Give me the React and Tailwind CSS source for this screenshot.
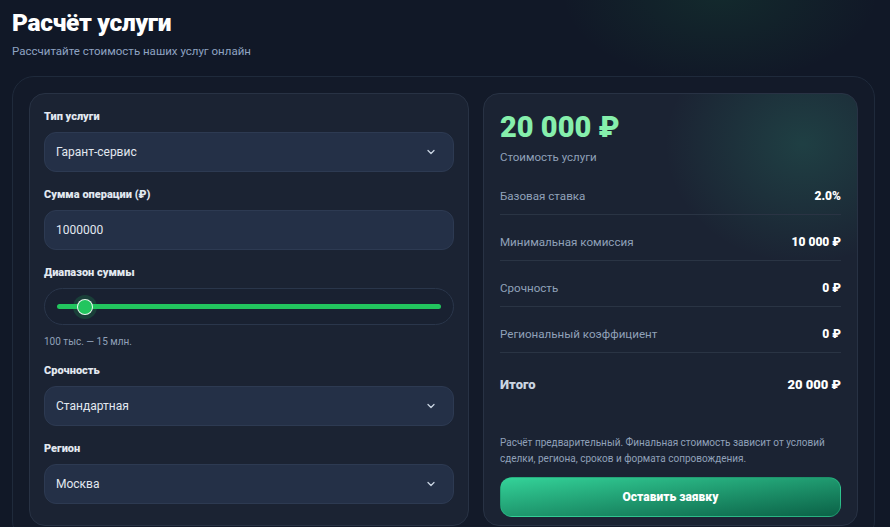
import { ChevronDown } from 'lucide-react';

const body = { fontFamily: 'Roboto, "Noto Sans", sans-serif' };
const heavy = { fontFamily: 'Roboto, Inter, sans-serif' };

function Label({ children }) {
  return (
    <div style={heavy} className="text-[11px] leading-[14px] font-black text-slate-200 mb-2">
      {children}
    </div>
  );
}

function Select({ value }) {
  return (
    <div className="h-10 rounded-xl bg-[#243047] border border-[#2d3a52] flex items-center justify-between pl-[11px] pr-4">
      <span className="text-[12px] text-slate-200">{value}</span>
      <ChevronDown className="h-3 w-3 text-slate-300" strokeWidth={2.5} />
    </div>
  );
}

function Row({ label, value }) {
  return (
    <div className="flex items-center justify-between py-[9px] border-b border-[#2a3444]">
      <span className="text-[11.6px] leading-[17px] text-slate-400">{label}</span>
      <span style={heavy} className="text-[12px] leading-[17px] font-black text-white">{value}</span>
    </div>
  );
}

export default function App() {
  return (
    <div style={body} className="relative min-h-screen bg-[#111827] overflow-hidden">
      {/* faint glow top right */}
      <div className="pointer-events-none absolute -top-24 left-[560px] w-[320px] h-[180px] rounded-full bg-[radial-gradient(ellipse_at_center,rgba(34,197,94,0.10),transparent_70%)]" />

      <div className="relative px-3 pt-[6px]">
        <h1 style={heavy} className="text-[24.5px] leading-[34px] font-black text-white tracking-[-0.3px]">
          Расчёт услуги
        </h1>
        <p className="mt-[3px] text-[11.5px] leading-[16px] text-[#8fa3c2]">
          Рассчитайте стоимость наших услуг онлайн
        </p>

        <div className="mt-[17px] mr-[3px] rounded-[22px] border border-[#1f2a3b] bg-[#131a29] p-4">
          <div className="grid grid-cols-[440px_1fr] gap-[14px]">
            {/* Left card */}
            <div className="rounded-2xl border border-[#283244] bg-[#1b2333] px-[14px] pt-4 pb-5 space-y-4">
              <div>
                <Label>Тип услуги</Label>
                <Select value="Гарант-сервис" />
              </div>
              <div>
                <Label>Сумма операции (₽)</Label>
                <div className="h-10 rounded-xl bg-[#243047] border border-[#2d3a52] flex items-center px-[11px]">
                  <span className="text-[12px] text-slate-200">1000000</span>
                </div>
              </div>
              <div>
                <Label>Диапазон суммы</Label>
                <div className="h-[37px] rounded-full border border-[#2a364b] bg-[#192131] flex items-center px-[12px]">
                  <div className="relative w-full h-[5px] rounded-full bg-[#22c55e]">
                    <div className="absolute top-1/2 left-[20px] -translate-y-1/2 h-4 w-4 rounded-full bg-[#22c55e] border border-white/90 shadow-[0_0_0_4px_rgba(34,197,94,0.18)]" />
                  </div>
                </div>
                <div className="mt-[10px] text-[10px] leading-[13px] text-slate-400">100 тыс. — 15 млн.</div>
              </div>
              <div>
                <Label>Срочность</Label>
                <Select value="Стандартная" />
              </div>
              <div>
                <Label>Регион</Label>
                <Select value="Москва" />
              </div>
            </div>

            {/* Right card */}
            <div className="relative overflow-hidden rounded-2xl border border-[#283244] bg-[#1b2333] px-4 pt-4 pb-2 flex flex-col">
              <div className="pointer-events-none absolute -top-20 -right-24 w-[300px] h-[260px] rounded-full bg-[radial-gradient(ellipse_at_center,rgba(52,211,153,0.16),transparent_65%)]" />
              <div className="relative">
                <div style={heavy} className="text-[29px] leading-[34px] font-black text-[#86efac]">
                  20 000 ₽
                </div>
                <div className="mt-[5px] text-[11.5px] leading-[16px] text-slate-400">Стоимость услуги</div>

                <div className="mt-[14px] flex flex-col gap-[10px]">
                  <Row label="Базовая ставка" value="2.0%" />
                  <Row label="Минимальная комиссия" value="10 000 ₽" />
                  <Row label="Срочность" value="0 ₽" />
                  <Row label="Региональный коэффициент" value="0 ₽" />
                  <div className="flex items-center justify-between pt-[13px] pb-2">
                    <span style={heavy} className="text-[13px] leading-[18px] font-black text-slate-300">Итого</span>
                    <span style={heavy} className="text-[13px] leading-[18px] font-black text-white">20 000 ₽</span>
                  </div>
                </div>

                <p className="mt-[33px] text-[10px] leading-[16px] text-slate-400">
                  Расчёт предварительный. Финальная стоимость зависит от условий сделки, региона, сроков и формата сопровождения.
                </p>
                <button
                  style={heavy}
                  className="mt-[10px] w-full h-10 rounded-xl border border-[#34d399]/40 bg-gradient-to-br from-[#34d399] to-[#0b6247] text-[12px] font-black text-white"
                >
                  Оставить заявку
                </button>
              </div>
            </div>
          </div>
        </div>
      </div>
    </div>
  );
}
